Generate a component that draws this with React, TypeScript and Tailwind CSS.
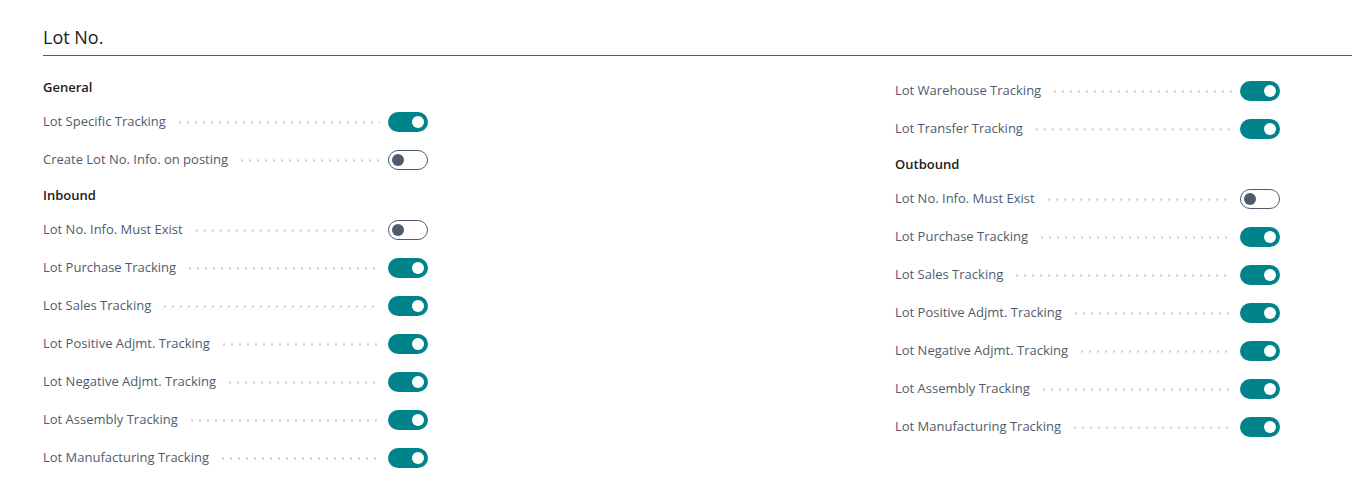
import React from 'react';

type Item = { kind: 'header'; label: string } | { kind: 'toggle'; label: string; on: boolean };

const leftItems: Item[] = [
  { kind: 'header', label: 'General' },
  { kind: 'toggle', label: 'Lot Specific Tracking', on: true },
  { kind: 'toggle', label: 'Create Lot No. Info. on posting', on: false },
  { kind: 'header', label: 'Inbound' },
  { kind: 'toggle', label: 'Lot No. Info. Must Exist', on: false },
  { kind: 'toggle', label: 'Lot Purchase Tracking', on: true },
  { kind: 'toggle', label: 'Lot Sales Tracking', on: true },
  { kind: 'toggle', label: 'Lot Positive Adjmt. Tracking', on: true },
  { kind: 'toggle', label: 'Lot Negative Adjmt. Tracking', on: true },
  { kind: 'toggle', label: 'Lot Assembly Tracking', on: true },
  { kind: 'toggle', label: 'Lot Manufacturing Tracking', on: true },
];

const rightItems: Item[] = [
  { kind: 'toggle', label: 'Lot Warehouse Tracking', on: true },
  { kind: 'toggle', label: 'Lot Transfer Tracking', on: true },
  { kind: 'header', label: 'Outbound' },
  { kind: 'toggle', label: 'Lot No. Info. Must Exist', on: false },
  { kind: 'toggle', label: 'Lot Purchase Tracking', on: true },
  { kind: 'toggle', label: 'Lot Sales Tracking', on: true },
  { kind: 'toggle', label: 'Lot Positive Adjmt. Tracking', on: true },
  { kind: 'toggle', label: 'Lot Negative Adjmt. Tracking', on: true },
  { kind: 'toggle', label: 'Lot Assembly Tracking', on: true },
  { kind: 'toggle', label: 'Lot Manufacturing Tracking', on: true },
];

const Toggle: React.FC<{ on: boolean }> = ({ on }) =>
  on ? (
    <div className="w-10 h-5 rounded-full bg-[#00838a] flex items-center justify-end pr-[4px] shrink-0">
      <div className="w-3 h-3 rounded-full bg-white" />
    </div>
  ) : (
    <div className="w-10 h-5 rounded-full bg-white border border-[#505c6d] flex items-center pl-[3px] shrink-0">
      <div className="w-3 h-3 rounded-full bg-[#505c6d]" />
    </div>
  );

const Column: React.FC<{ items: Item[]; className?: string }> = ({ items, className }) => (
  <div className={`w-[385px] flex flex-col ${className ?? ''}`}>
    {items.map((it, i) =>
      it.kind === 'header' ? (
        <div key={i} className="h-8 pt-[7px] text-[13px] leading-[18px] font-semibold text-[#212121]">
          {it.label}
        </div>
      ) : (
        <div key={i} className="h-[38px] flex items-center">
          <span className="text-[13px] text-[#505c6d] whitespace-nowrap">{it.label}</span>
          <div className="flex-1 mr-[8px] ml-[10px] h-[3px] bg-[radial-gradient(circle,#cdd1d5_1px,transparent_1.3px)] bg-[length:8px_3px] bg-repeat-x" />
          <Toggle on={it.on} />
        </div>
      )
    )}
  </div>
);

const App: React.FC = () => {
  return (
    <div className="min-h-screen bg-white pl-[43px] font-['Segoe_UI','Open_Sans',sans-serif]">
      <div className="pt-[28px] pb-[9px] border-b border-[#505c6d] text-[18px] leading-[18px] text-[#212121]">
        Lot No.
      </div>
      <div className="flex gap-[467px] mt-[15px]">
        <Column items={leftItems} />
        <Column items={rightItems} className="pt-[1px]" />
      </div>
    </div>
  );
};

export default App;
